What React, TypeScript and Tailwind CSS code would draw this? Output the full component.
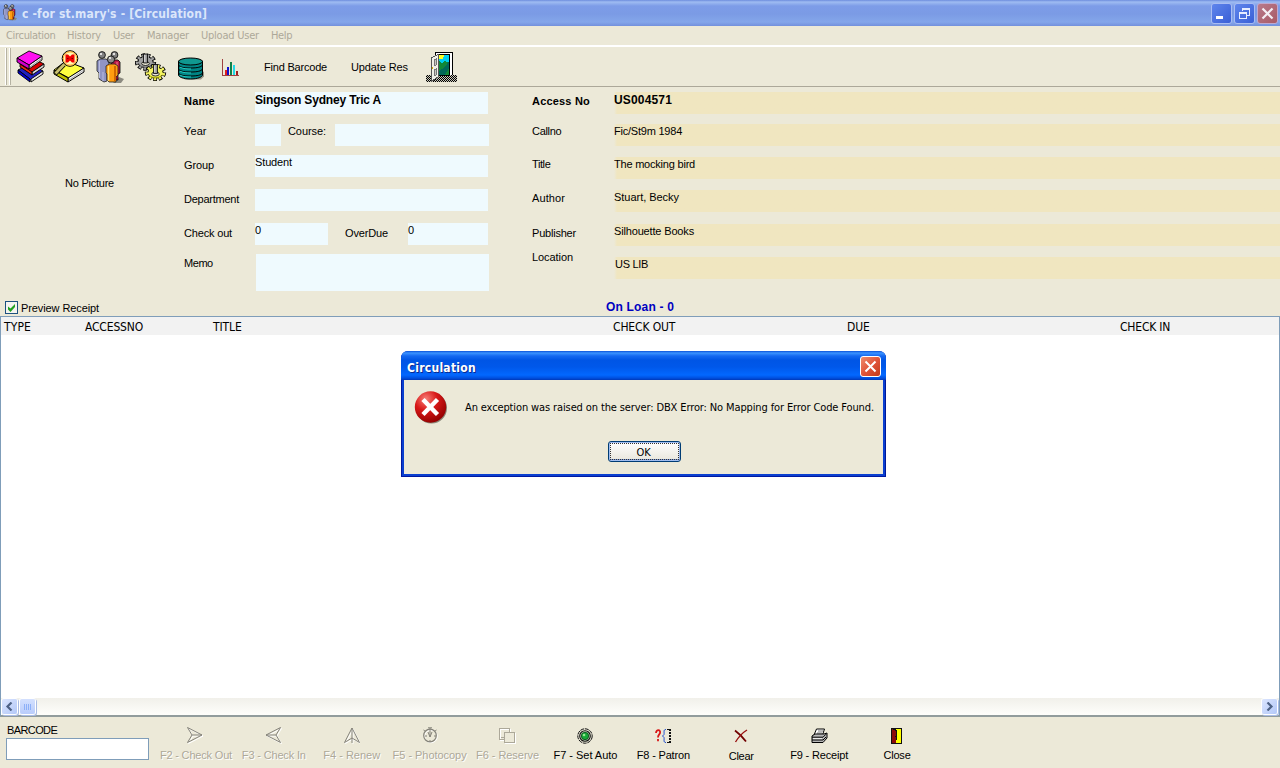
import type { ReactNode } from "react";

const tahoma = "font-['DejaVu_Sans_Condensed','DejaVu_Sans',sans-serif] [font-stretch:condensed]";

/* ---------- toolbar icons ---------- */

function People({ className = "" }: { className?: string }) {
  return (
    <svg className={className} viewBox="0 0 28 33">
      <path d="M17 32h8l3-4-5-2z" fill="#8c8a80" />
      <path d="M15 9h7l2 2v11l-2 1v6h-6z" fill="#c01848" stroke="#000" strokeWidth=".8" />
      <path d="M21 11v12" stroke="#f08090" />
      <path d="M1 10l3-2h6l3 2v11l-2 1v8l-3 1-5-3V22l-2-2z" fill="#9094c4" stroke="#222" strokeWidth=".8" />
      <path d="M3.500 10v17M7 21v9" stroke="#b8bce0" />
      <path d="M10 15l3-2h6l3 2v9l-2 2v5h-7l-2-2v-6l-1-1z" fill="#ff9c10" stroke="#222" strokeWidth=".8" />
      <path d="M12.500 15v15" stroke="#ffe070" strokeWidth="1.500" />
      <path d="M19 15v15" stroke="#d06800" strokeWidth="2" />
      <circle cx="6" cy="4" r="3.400" fill="#808080" stroke="#000" strokeWidth=".8" />
      <circle cx="18.500" cy="4" r="3.400" fill="#808080" stroke="#000" strokeWidth=".8" />
      <circle cx="15" cy="8.500" r="3.600" fill="#8c8c8c" stroke="#000" strokeWidth=".8" />
      <path d="M4 3h2M17 3h2M13 7h2" stroke="#fff" strokeWidth="1.500" />
    </svg>
  );
}

function Books() {
  return (
    <svg width="30" height="33" viewBox="0 0 30 33" strokeWidth=".9">
      <path d="M2 20l12-6 13 7-12 9z" fill="#2020c0" stroke="#000" />
      <path d="M15 29l12-8v3L15 32z" fill="#e8e8e8" stroke="#000" />
      <path d="M2 20v3l12 9v-3z" fill="#0000d8" stroke="#000" />
      <path d="M4 14l12-6 12 6-13 9z" fill="#d80000" stroke="#000" />
      <path d="M16 22l12-8v3l-12 8z" fill="#d8d8d8" stroke="#000" />
      <path d="M4 14v3l12 8v-3z" fill="#e82810" stroke="#000" />
      <path d="M13 15l13-9v4l-13 9z" fill="#f0f0f0" stroke="#000" />
      <path d="M14 17l11-8" stroke="#888" />
      <path d="M1 8l12-7 13 5-13 9z" fill="#ff10f0" stroke="#000" />
      <path d="M1 8v4l12 7v-4z" fill="#d000c8" stroke="#000" />
    </svg>
  );
}

function SearchBook() {
  return (
    <svg width="33" height="33" viewBox="0 0 33 33">
      <path d="M1 20l12-9 18 7-15 10z" fill="#ffff40" stroke="#000" />
      <path d="M15 28l16-10v4L15 32z" fill="#f4f4f4" stroke="#000" />
      <path d="M16 30l15-10" stroke="#888" strokeWidth=".7" />
      <path d="M1 20v4l14 8v-4z" fill="#c0c000" stroke="#000" />
      <path d="M11 14.500 2 24" stroke="#000" strokeWidth="4.600" />
      <path d="M11.500 14 2.500 23.500" stroke="#c8c070" strokeWidth="2.800" />
      <circle cx="17" cy="8.500" r="7.800" fill="#fff080" stroke="#000" />
      <circle cx="17" cy="8.500" r="6.700" fill="#fff8b0" stroke="#ffa830" />
      <path d="M12.500 4.500h2.500l2 2 2-2h2.500v8H19l-2-2-2 2h-2.500z" fill="#f00000" />
      <path d="M14 8.500h1.500M18.500 8.500H20" stroke="#800000" />
    </svg>
  );
}

function Gear({ x, y, fill, shade }: { x: number; y: number; fill: string; shade: string }) {
  return (
    <g transform={`translate(${x} ${y})`}>
      <ellipse rx="8.200" ry="6.200" fill={fill} stroke="#000" strokeWidth="5" pathLength="36" strokeDasharray="2.6 1.4" />
      <ellipse rx="7.600" ry="5.600" fill={fill} stroke="#000" strokeWidth="1" />
      <ellipse rx="7.600" ry="5.600" fill="none" stroke={fill} strokeWidth="4.400" pathLength="36" strokeDasharray="1.7 2.3" strokeDashoffset="-.45" />
      <path d="M-6 3c3 3 9 3 12 0" fill="none" stroke={shade} />
      <ellipse cy="1.500" rx="3.800" ry="2" fill="#ece9d8" stroke="#000" strokeWidth=".8" />
      <path d="M-2-8h4v9h-4z" fill="#989898" stroke="#000" strokeWidth=".8" />
      <path d="M-.7-7v7" stroke="#e8e8e8" />
    </g>
  );
}

function Gears() {
  return (
    <svg width="32" height="29" viewBox="0 0 32 29">
      <Gear x={10.5} y={10} fill="#a0a0a0" shade="#606060" />
      <Gear x={20.5} y={20.500} fill="#f4f460" shade="#a8a800" />
    </svg>
  );
}

function Database() {
  return (
    <svg width="28" height="24" viewBox="0 0 28 24">
      <path d="M7 22.500h17l3-3v-5z" fill="#9a988a" />
      <path d="M1.500 4v14c0 2 5 4 12 4s12-2 12-4V4z" fill="#008484" stroke="#000" />
      <ellipse cx="13.500" cy="4.500" rx="12" ry="3.500" fill="#109890" stroke="#000" />
      <path d="M1.500 8c1 2 5 3 12 3s11-1 12-3M1.500 12c1 2 5 3 12 3s11-1 12-3M1.500 16c1 2 5 3 12 3s11-1 12-3" fill="none" stroke="#000" />
      <path d="M3 10.200c3 1.500 7 1.800 11 1.800M3 14.200c3 1.500 7 1.800 11 1.800M3 18.200c3 1.500 7 1.800 11 1.800" fill="none" stroke="#28c8c0" />
    </svg>
  );
}

function Chart() {
  return (
    <svg width="19" height="19" viewBox="0 0 19 19" shapeRendering="crispEdges">
      <path d="M1.500 1v16.500H18" fill="none" stroke="#a04040" />
      <path d="M4 12h2v5H4z" fill="#e02020" />
      <path d="M6 9h2v8H6z" fill="#1010d0" />
      <path d="M9 4h2v13H9z" fill="#108048" />
      <path d="M12 7h2v10h-2z" fill="#20d8e8" />
      <path d="M15 13h2v4h-2z" fill="#a02020" />
    </svg>
  );
}

function Door() {
  return (
    <svg width="32" height="31" viewBox="0 0 32 31" shapeRendering="crispEdges">
      <defs>
        <pattern id="hatch" width="2" height="2" patternUnits="userSpaceOnUse">
          <path d="M0 0h1v1H0zM1 1h1v1H1z" fill="#000" />
        </pattern>
      </defs>
      <path d="M0 23h31v7H0z" fill="#c8c6b8" />
      <path d="M0 23h31v7H0z" fill="url(#hatch)" />
      <path d="M9 0h18v23H9z" fill="#fff" />
      <path d="M9.500 23V.5h17V23" fill="none" stroke="#000" />
      <path d="M12.500 2.500h11v21h-11z" fill="#00d0f0" stroke="#000" />
      <path d="M13 3h5l-1 4h-4z" fill="#ffff20" />
      <path d="M13 9l3 2 3-2 4 2v12H13z" fill="#108838" />
      <path d="M23 9l-4 6-6 4v4h6l4-7z" fill="#006858" />
      <path d="M5.500 5.500l7-3v22l-7 5z" fill="#f0f0e8" stroke="#555" />
      <path d="M8 8l2-1v6l-2 1zM8 18l2-1v6l-2 1z" fill="#c8c8c0" stroke="#777" />
      <path d="M6 15h1v2H6z" fill="#d0b000" />
    </svg>
  );
}

/* ---------- action icons ---------- */

const dart = "M.5.5 15 8 .5 15.500 5 8zM5 8h10";

function CheckOutIcon() {
  return (
    <svg width="17" height="17" viewBox="0 0 17 17" fill="none">
      <path d={dart} stroke="#fff" transform="translate(1 1)" />
      <path d={dart} stroke="#85837a" />
    </svg>
  );
}
function CheckInIcon() {
  return (
    <svg width="17" height="17" viewBox="0 0 17 17" fill="none">
      <path d={dart} stroke="#fff" transform="translate(17 1) scale(-1 1)" />
      <path d={dart} stroke="#85837a" transform="translate(16 0) scale(-1 1)" />
    </svg>
  );
}
function RenewIcon() {
  return (
    <svg width="16" height="17" viewBox="0 0 16 17" fill="none">
      <path d="M8 1 .5 15.500 8 11l7.500 4.500zM8 1v15" stroke="#fff" transform="translate(1 1)" />
      <path d="M8 1 .5 15.500 8 11l7.500 4.500zM8 1v15" stroke="#85837a" />
    </svg>
  );
}
function CopyClock() {
  return (
    <svg width="16" height="17" viewBox="0 0 16 17" fill="none">
      <circle cx="9" cy="9.500" r="6.300" stroke="#fff" />
      <circle cx="8" cy="8.500" r="6.300" stroke="#85837a" strokeWidth="1.200" />
      <path d="M6 .8h4M8 1v9M6 5l2 5 2-5M1.500 3l2 1.500M14.500 3l-2 1.500M3 9h2M12 9h2M8 13v2" stroke="#85837a" />
    </svg>
  );
}
function ReserveIcon() {
  return (
    <svg width="17" height="16" viewBox="0 0 17 16" fill="none" shapeRendering="crispEdges">
      <path d="M1.500 1.500h10v11h-10zM6.500 5.500h10v10h-10z" stroke="#fff" />
      <path d="M.5.5h10v11H.5z" stroke="#aca899" />
      <path d="M5.500 4.500h10v10h-10z" fill="#ece9d8" stroke="#aca899" />
      <path d="M2 9h3v2" stroke="#aca899" />
    </svg>
  );
}
function AutoIcon() {
  return (
    <svg width="16" height="16" viewBox="0 0 16 16" fill="none">
      <circle cx="8" cy="8" r="7.200" stroke="#111" strokeDasharray="4 .8" />
      <circle cx="8" cy="8" r="5.300" fill="#c8d8c0" stroke="#111" strokeWidth="1.100" />
      <circle cx="8" cy="8" r="3.700" fill="#18a838" stroke="#004810" strokeWidth=".8" />
      <circle cx="7" cy="7" r="1.300" fill="#90e890" />
    </svg>
  );
}
function PatronIcon() {
  return (
    <svg width="17" height="16" viewBox="0 0 17 16" fill="none">
      <path d="M1 5c0-4 5-3.500 4 0C4.700 6.500 3 6.500 3 9.500M3 11v2.200" stroke="#d81818" strokeWidth="1.800" />
      <path d="M11 1.500c-3 0-1.500 3-2 5L7.500 8 9 9.500c.5 2-1 5 2 5" stroke="#1848d0" />
      <path d="M12 1.500h4M12 14.500h4" stroke="#111" strokeDasharray="2 1" shapeRendering="crispEdges" />
      <path d="M15 1v14" stroke="#111" strokeWidth="2" strokeDasharray="2 1" shapeRendering="crispEdges" />
    </svg>
  );
}
function ClearIcon() {
  return (
    <svg width="14" height="14" viewBox="0 0 14 14" fill="none">
      <path d="M1 1.500c4 3 8 7 11 11" stroke="#700000" strokeWidth="1.800" />
      <path d="M13 1C8 4 4 9 1.500 13" stroke="#981010" strokeWidth="1.400" />
    </svg>
  );
}
function PrinterIcon() {
  return (
    <svg width="17" height="16" viewBox="0 0 17 16">
      <path d="M5.500 1h8l-2 6H3z" fill="#fff" stroke="#000" />
      <path d="M7 3h5M6 5h5" stroke="#555" strokeWidth=".8" />
      <path d="M1 8l3-2h9l3-1v5l-4 4.500H1z" fill="#b8b8b8" stroke="#000" />
      <path d="M1 9.200h11l3-3M1 12h11l3-3" stroke="#000" fill="none" />
      <path d="M2 10.600h9" stroke="#fff" strokeWidth=".8" />
    </svg>
  );
}
function CloseDoorIcon() {
  return (
    <svg width="12" height="16" viewBox="0 0 12 16" shapeRendering="crispEdges">
      <path d="M0 0h11v16H0z" fill="#111" />
      <path d="M5 1h5v14H5z" fill="#ffff00" />
      <path d="M1 1l4 2v12H1z" fill="#8b0a0a" />
      <path d="M5.500 2v10M4 8h1v1" stroke="#111" fill="none" />
    </svg>
  );
}

/* ---------- building blocks ---------- */

function Label({ className, children }: { className: string; children: ReactNode }) {
  return <span className={`block h-[14px] shrink-0 whitespace-pre leading-[14px] ${className}`}>{children}</span>;
}

function Box({ className, children }: { className: string; children?: ReactNode }) {
  return <div className={`h-[22px] shrink-0 bg-[#effafe] ${className}`}>{children}</div>;
}

function BookRow({ row, label, lc, value, vc }: { row: string; label: string; lc: string; value: string; vc: string }) {
  return (
    <div className={`flex ${row}`}>
      <div className="w-[82px] shrink-0">
        <Label className={lc}>{label}</Label>
      </div>
      <div className="h-[22px] grow bg-gradient-to-r from-[#ece9d8] via-[#f0e6c0] via-[3px] to-[#f0e6c0]">
        <Label className={vc}>{value}</Label>
      </div>
    </div>
  );
}

function Action({ icon, label, tc, disabled = false, low = false }: { icon: ReactNode; label: string; tc: string; disabled?: boolean; low?: boolean }) {
  return (
    <div className="flex flex-col items-center">
      <div className="flex h-[21px] items-center">{icon}</div>
      <Label className={`${tc} ${low ? "mt-[3px]" : "mt-[2px]"} ${disabled ? "text-[#aca899] [text-shadow:1px_1px_0_#fff]" : "text-black"}`}>{label}</Label>
    </div>
  );
}

const columns = [
  { name: "TYPE", cls: "w-[81px] tracking-[0.1px]" },
  { name: "ACCESSNO", cls: "w-[128px] tracking-[-0.17px]" },
  { name: "TITLE", cls: "w-[400px] tracking-[-0.1px]" },
  { name: "CHECK OUT", cls: "w-[234px] tracking-[-0.15px]" },
  { name: "DUE", cls: "w-[273px] tracking-[-0.1px]" },
  { name: "CHECK IN", cls: "w-[100px] tracking-[-0.2px]" },
];

const winButton = "flex h-[21px] w-[21px] items-center justify-center rounded-[3px] border";

export default function App() {
  return (
    <div className="relative flex h-[768px] w-[1280px] flex-col overflow-hidden bg-[#ece9d8] font-['Liberation_Sans',sans-serif] text-[11px] text-black">
      {/* title bar */}
      <div className="flex h-[26px] shrink-0 items-center bg-[linear-gradient(#6d8ddd_0,#9fbcf2_2px,#7d9ce8_6px,#7b9be5_14px,#84a6ea_22px,#7390dc_26px)] pl-[3px] pr-[2px]">
        <People className="mb-[2px] h-[17px] w-[14px]" />
        <span className={`ml-[5px] mt-[2px] whitespace-pre text-[12px] font-bold leading-[16px] tracking-[0.16px] text-[#dbe6fa] ${tahoma}`}>c -for st.mary's - [Circulation]</span>
        <div className="ml-auto flex gap-[2px]">
          <div className={`${winButton} border-[#a9bdf3] bg-gradient-to-br from-[#5f85ec] to-[#3a5fd6]`}>
            <svg width="13" height="13" shapeRendering="crispEdges"><path d="M1 9h7v3H1z" fill="#fff" /></svg>
          </div>
          <div className={`${winButton} border-[#a9bdf3] bg-gradient-to-br from-[#5f85ec] to-[#3a5fd6]`}>
            <svg width="13" height="13" shapeRendering="crispEdges" fill="none" stroke="#e6edff">
              <path d="M4 4V2h7v6H9M4 1.500h8" />
              <path d="M1.500 5.500h7v6h-7zM1 6h8" />
            </svg>
          </div>
          <div className={`${winButton} border-[#c0a8cf] bg-gradient-to-br from-[#b87a8c] to-[#a85a66]`}>
            <svg width="13" height="13" stroke="#f4eef4" strokeWidth="2.200"><path d="M1.500 1.500l10 10M11.500 1.500l-10 10" /></svg>
          </div>
        </div>
      </div>

      {/* menu */}
      <div className={`flex h-[21px] shrink-0 border-b-2 border-white pl-[6px] pt-[3px] leading-[14px] text-[#aca899] ${tahoma}`}>
        <span className="w-[61px] tracking-[-0.32px]">Circulation</span>
        <span className="w-[46px] tracking-[-0.17px]">History</span>
        <span className="w-[34px] tracking-[-0.3px]">User</span>
        <span className="w-[54px] tracking-[-0.2px]">Manager</span>
        <span className="w-[70px] tracking-[-0.22px]">Upload User</span>
        <span className="tracking-[-0.35px]">Help</span>
      </div>

      {/* toolbar */}
      <div className="flex h-[40px] shrink-0 items-start border-b border-[#aca899] pl-[5px]">
        <div className="mt-[1px] h-[37px] w-[2px] border-r border-[#b5b2a2] bg-white" />
        <div className="ml-[2px] mt-[1px] h-[37px] w-[2px] border-r border-[#b5b2a2] bg-white" />
        <div className="ml-[5px] mt-[3px]"><Books /></div>
        <div className="ml-[7px] mt-[3px]"><SearchBook /></div>
        <People className="ml-[10px] mt-[4px] h-[33px] w-[28px]" />
        <div className="ml-[11px] mt-[5px]"><Gears /></div>
        <div className="ml-[10px] mt-[10px]"><Database /></div>
        <div className="ml-[16px] mt-[11px]"><Chart /></div>
        <Label className="ml-[24px] mt-[13px] w-[87px] tracking-[-0.2px]">Find Barcode</Label>
        <Label className="mt-[13px] w-[75px] tracking-[-0.11px]">Update Res</Label>
        <div className="mt-[5px]"><Door /></div>
      </div>

      {/* patron and book details */}
      <div className="flex h-[213px] shrink-0">
        <div className="w-[184px] pl-[65px] pt-[89px]">
          <Label className="tracking-[-0.24px]">No Picture</Label>
        </div>

        <div className="flex w-[348px] flex-col pt-[5px]">
          <div className="flex h-[32px]">
            <Label className="mt-[2px] w-[71px] font-bold tracking-[0.26px]">Name</Label>
            <Box className="w-[233px]"><Label className="mt-[1px] text-[12px] font-bold tracking-[-0.17px]">Singson Sydney Tric A</Label></Box>
          </div>
          <div className="flex h-[31px]">
            <Label className="w-[71px] tracking-[0.1px]">Year</Label>
            <Box className="w-[26px]" />
            <Label className="ml-[7px] w-[47px] tracking-[-0.08px]">Course:</Label>
            <Box className="w-[154px]" />
          </div>
          <div className="flex h-[34px]">
            <Label className="mt-[3px] w-[71px] tracking-[-0.12px]">Group</Label>
            <Box className="w-[233px]"><Label className="tracking-[-0.13px]">Student</Label></Box>
          </div>
          <div className="flex h-[34px]">
            <Label className="mt-[3px] w-[71px] tracking-[-0.25px]">Department</Label>
            <Box className="w-[233px]" />
          </div>
          <div className="flex h-[31px]">
            <Label className="mt-[3px] w-[71px] tracking-[-0.17px]">Check out</Label>
            <Box className="w-[73px]"><Label className="">0</Label></Box>
            <Label className="ml-[17px] mt-[3px] w-[63px] tracking-[-0.15px]">OverDue</Label>
            <Box className="w-[80px]"><Label className="">0</Label></Box>
          </div>
          <div className="flex">
            <Label className="mt-[2px] w-[72px] tracking-[-0.45px]">Memo</Label>
            <div className="h-[37px] w-[233px] bg-[#effafe]" />
          </div>
        </div>

        <div className="flex grow flex-col pt-[5px]">
          <BookRow row="h-[32px]" label="Access No" lc="mt-[2px] font-bold tracking-[0.19px]" value="US004571" vc="mt-[1px] text-[12px] font-bold tracking-[0.16px]" />
          <BookRow row="h-[33px]" label="Callno" lc="tracking-[-0.3px]" value="Fic/St9m 1984" vc="tracking-[-0.22px]" />
          <BookRow row="h-[33px]" label="Title" lc="tracking-[-0.4px]" value="The mocking bird" vc="tracking-[-0.21px]" />
          <BookRow row="h-[34px]" label="Author" lc="mt-[1px] tracking-[0.1px]" value="Stuart, Becky" vc="tracking-[-0.03px]" />
          <BookRow row="h-[33px]" label="Publisher" lc="mt-[2px] tracking-[-0.21px]" value="Silhouette Books" vc="tracking-[-0.16px]" />
          <BookRow row="h-[22px]" label="Location" lc="mt-[-7px] tracking-[-0.07px]" value="US LIB" vc="pl-[1px] tracking-[-0.31px]" />
        </div>
      </div>

      {/* receipt option and loan count */}
      <div className="flex h-[16px] shrink-0">
        <div className="ml-[5px] mt-[1px] flex h-[13px] w-[13px] items-center justify-center border border-[#1c5180] bg-[#f4f4f0]">
          <svg width="9" height="9" viewBox="0 0 9 9"><path d="M1 3.500v3L3.500 9 8 4V1L3.500 5.500z" fill="#21a121" /></svg>
        </div>
        <Label className="ml-[3px] mt-[1px] w-[585px] tracking-[-0.1px]">Preview Receipt</Label>
        <Label className="text-[12px] font-bold tracking-[0.18px] text-[#0000c0]">On Loan - 0</Label>
      </div>

      {/* loan list */}
      <div className="flex h-[401px] shrink-0 flex-col border border-b-2 border-[#7f9db9] border-b-[#929c9c] bg-white">
        <div className={`flex h-[18px] shrink-0 bg-[#f2f2f2] pl-[3px] pt-px text-[12px] leading-[19px] ${tahoma}`}>
          {columns.map((c) => (
            <span key={c.name} className={`shrink-0 ${c.cls}`}>{c.name}</span>
          ))}
        </div>
        <div className="grow" />
        <div className="flex h-[17px] shrink-0 items-center bg-gradient-to-b from-[#f1f0ea] to-[#fefefb]">
          <div className="ml-[1px] flex h-[15px] w-[15px] items-center justify-center rounded-[2px] bg-gradient-to-br from-[#dbe5fe] to-[#b3c8f8] shadow-[0_0_0_1px_#fff,1px_1px_0_1px_#a9bbe4]">
            <svg width="9" height="9" fill="none" stroke="#4d6185" strokeWidth="2.200"><path d="M6.500.5l-4 4 4 4" /></svg>
          </div>
          <div className="ml-[3px] flex h-[15px] w-[15px] items-center justify-center rounded-[2px] bg-gradient-to-b from-[#d3e0fe] to-[#b9ccfb] shadow-[0_0_0_1px_#fff,1px_1px_0_1px_#a9bbe4]">
            <svg width="8" height="6" shapeRendering="crispEdges" stroke="#8cb0f8"><path d="M.5 0v6M2.500 0v6M4.500 0v6M6.500 0v6" /></svg>
          </div>
          <div className="ml-auto mr-[2px] flex h-[15px] w-[15px] items-center justify-center rounded-[2px] bg-gradient-to-br from-[#dbe5fe] to-[#b3c8f8] shadow-[0_0_0_1px_#fff,1px_1px_0_1px_#a9bbe4]">
            <svg width="9" height="9" fill="none" stroke="#4d6185" strokeWidth="2.200"><path d="M2.500.5l4 4-4 4" /></svg>
          </div>
        </div>
      </div>

      {/* barcode entry and actions */}
      <div className="flex grow">
        <div className="w-[157px] pl-[6px] pt-[6px]">
          <Label className="pl-[1px] tracking-[-0.6px]">BARCODE</Label>
          <div className="mt-[1px] h-[22px] w-[143px] border border-[#7f9db9] bg-white" />
        </div>
        <div className="grid w-[779px] grid-cols-10 pt-[8px]">
          <Action disabled icon={<CheckOutIcon />} label="F2 - Check Out" tc="tracking-[-0.18px]" />
          <Action disabled icon={<CheckInIcon />} label="F3 - Check In" tc="tracking-[-0.16px]" />
          <Action disabled icon={<RenewIcon />} label="F4 - Renew" tc="tracking-[0px]" />
          <Action disabled icon={<CopyClock />} label="F5 - Photocopy" tc="tracking-[-0.04px]" />
          <Action disabled icon={<ReserveIcon />} label="F6 - Reserve" tc="tracking-[-0.05px]" />
          <Action icon={<AutoIcon />} label="F7 - Set Auto" tc="tracking-[-0.02px]" />
          <Action icon={<PatronIcon />} label="F8 - Patron" tc="tracking-[-0.18px]" />
          <Action low icon={<ClearIcon />} label="Clear" tc="tracking-[-0.26px]" />
          <Action icon={<PrinterIcon />} label="F9 - Receipt" tc="tracking-[-0.16px]" />
          <Action icon={<CloseDoorIcon />} label="Close" tc="tracking-[-0.23px]" />
        </div>
      </div>

      {/* error dialog */}
      <div className={`absolute left-[401px] top-[351px] flex h-[126px] w-[485px] flex-col rounded-t-[7px] bg-[#0a3fd0] px-[3px] pb-[3px] shadow-[inset_1px_-1px_0_#0018a0,inset_-1px_-1px_0_#001898] ${tahoma}`}>
        <div className="mx-[-3px] flex h-[29px] shrink-0 items-center rounded-t-[7px] bg-[linear-gradient(#0a50d8_0,#3b93ff_2px,#1468f0_5px,#0055e5_9px,#0058ea_16px,#0268ff_24px,#0050e0_27px,#0038b8_29px)] pl-[6px] pr-[5px]">
          <span className="mt-[4px] whitespace-pre text-[12px] font-bold leading-[16px] tracking-[0.27px] text-white [text-shadow:1px_1px_0_#0a2a90]">Circulation</span>
          <div className={`${winButton} ml-auto mt-[2px] border-white bg-gradient-to-br from-[#ee8a6c] via-[#e0553a] to-[#c43a18]`}>
            <svg width="13" height="13" stroke="#fff" strokeWidth="2"><path d="M1.500 1.500l10 10M11.500 1.500l-10 10" /></svg>
          </div>
        </div>
        <div className="flex grow flex-col bg-[#ece9d8]">
          <div className="flex h-[61px]">
            <svg className="ml-[10px] mt-[10px]" width="34" height="35" viewBox="0 0 34 35">
              <defs>
                <radialGradient id="ball" cx="35%" cy="25%" r="80%">
                  <stop offset="0" stopColor="#f88078" />
                  <stop offset="0.45" stopColor="#d81818" />
                  <stop offset="1" stopColor="#900000" />
                </radialGradient>
              </defs>
              <circle cx="17.500" cy="18" r="15.500" fill="#8a8678" />
              <circle cx="16.500" cy="17" r="15.700" fill="url(#ball)" />
              <path d="M10.500 11l11.500 12M22 11l-11.500 12" stroke="#fff" strokeWidth="4.400" strokeLinecap="square" />
            </svg>
            <span className="ml-[17px] mt-[21px] whitespace-pre leading-[14px] tracking-[-0.12px]">An exception was raised on the server: DBX Error: No Mapping for Error Code Found.</span>
          </div>
          <div className="ml-[204px] flex h-[21px] w-[73px] rounded-[3px] border border-[#003c74] bg-gradient-to-b from-white to-[#e8e6dc] p-[1px] shadow-[inset_0_0_0_1px_#a0bdf0,inset_0_-1px_0_1px_#7f9ee0]">
            <div className="flex grow items-center justify-center border border-dotted border-[#333] pr-[2px] pt-[2px] leading-[14px] tracking-[-0.14px]">OK</div>
          </div>
        </div>
      </div>
    </div>
  );
}
